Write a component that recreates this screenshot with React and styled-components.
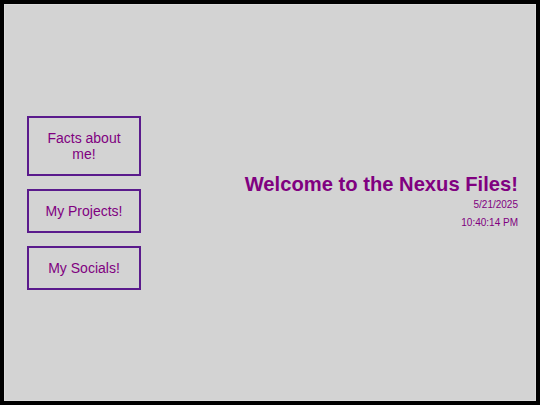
import React from "react";
import styled, { createGlobalStyle } from "styled-components";

const Global = createGlobalStyle`
  html, body { margin: 0; padding: 0; background: #000; }
  body { font-family: "Liberation Sans", Arial, sans-serif; }
  * { box-sizing: border-box; }
`;

const Frame = styled.div`
  width: 540px;
  height: 405px;
  border: 4px solid #000;
  background: #d3d3d3;
  box-shadow: inset 0 0 0 1px #dcdcdc;
  display: flex;
  align-items: center;
  justify-content: space-between;
  padding: 0 18px 0 23px;
`;

const Nav = styled.nav`
  display: flex;
  flex-direction: column;
  gap: 13px;
  width: 114px;
`;

const NavButton = styled.button`
  width: 114px;
  background: transparent;
  border: 2px solid #5a1a8c;
  color: #800080;
  font-family: "Liberation Sans", Arial, sans-serif;
  font-size: 14px;
  line-height: 16px;
  padding: 12px 12px;
  text-align: center;
  cursor: pointer;
`;

const Hero = styled.div`
  display: flex;
  flex-direction: column;
  align-items: flex-end;
  color: #800080;
  margin-bottom: 4px;
`;

const Title = styled.h1`
  margin: 0;
  font-size: 20.2px;
  line-height: 24px;
  font-weight: bold;
`;

const Stamp = styled.p`
  margin: ${(p) => (p.$first ? "3px" : "6px")} 0 0;
  font-size: 10px;
  line-height: 12px;
`;

export default function App() {
  return (
    <>
      <Global />
      <Frame>
        <Nav>
          <NavButton>Facts about me!</NavButton>
          <NavButton>My Projects!</NavButton>
          <NavButton>My Socials!</NavButton>
        </Nav>
        <Hero>
          <Title>Welcome to the Nexus Files!</Title>
          <Stamp $first>5/21/2025</Stamp>
          <Stamp>10:40:14 PM</Stamp>
        </Hero>
      </Frame>
    </>
  );
}
